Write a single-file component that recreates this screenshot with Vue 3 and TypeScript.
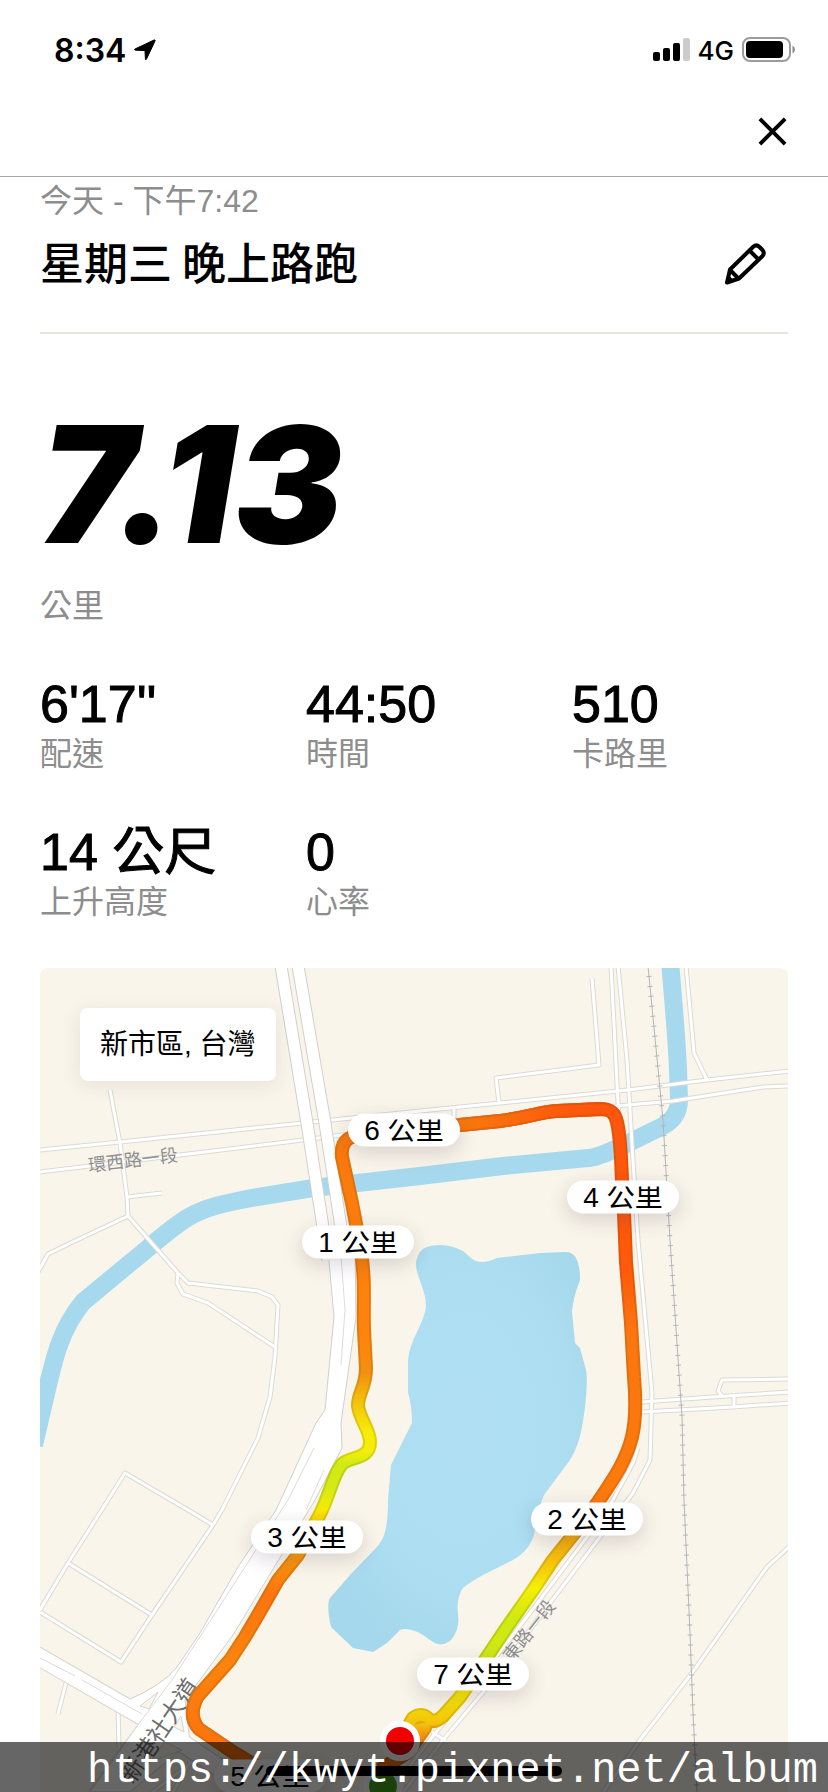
<script setup lang="ts">
interface Stat {
  value: string
  label: string
}

interface Marker {
  km: number
  x: number
  y: number
}

const MAP = { x: 40, y: 968, width: 748, height: 824 }

const stats: Stat[] = [
  { value: "6'17''", label: '配速' },
  { value: '44:50', label: '時間' },
  { value: '510', label: '卡路里' },
  { value: '14 公尺', label: '上升高度' },
  { value: '0', label: '心率' },
]

// Marker centres, in the map's own coordinates.
const markers: Marker[] = [
  { km: 5, x: 270, y: 1776 },
  { km: 1, x: 358, y: 1242 },
  { km: 2, x: 587, y: 1519 },
  { km: 3, x: 307, y: 1537 },
  { km: 4, x: 623, y: 1197 },
  { km: 6, x: 404, y: 1130 },
  { km: 7, x: 473, y: 1674 },
]

const place = (m: Marker) => ({
  left: `${((m.x - MAP.x) / MAP.width) * 100}%`,
  top: `${((m.y - MAP.y) / MAP.height) * 100}%`,
})

const roads: string[] = [
  'M40 1150 L120 1142 L303 1123 L440 1109 L500 1103 L628 1090 L707 1080 L790 1071',
  'M40 1172 L180 1155 L303 1140 L350 1134 L617 1106 L673 1101 L763 1087 L790 1086',
  'M110 1090 L120 1143 L127 1197 L128 1216 L178 1273 L188 1283 L258 1291 L272 1297 L278 1305 L275 1357 L270 1397 L258 1438 L222 1510 L213 1525 L152 1615 L121 1662 L40 1612',
  'M178 1273 L177 1283 L183 1294 L208 1303 L275 1347',
  'M127 1197 L162 1193',
  'M128 1216 L77 1240 L48 1254 L38 1272',
  'M40 1610 L68 1563 L108 1500 L125 1473 L188 1510 L213 1525',
  'M68 1563 L152 1615',
  'M67 1679 L58 1714',
  'M118 1708 L119 1748',
  'M611 966 L617 1083 L620 1140 L630 1250',
  'M618 966 L627 1060 L633 1160 L638 1240 L652 1393 L650 1460 L633 1493 L600 1537 L550 1603 L485 1690 L443 1740 L402 1794',
  'M638 1448 L633 1463 L613 1500 L587 1537 L530 1613 L470 1690 L430 1740 L388 1794',
  'M592 978 L599 1065 L496 1078 L499 1103',
  'M454 1108 L454 1122',
  'M686 966 L694 1053 L707 1080',
  'M642 1402 L727 1396 L790 1392',
  'M642 1412 L733 1407 L790 1403',
  'M734 1396 L734 1407',
  'M790 1379 L722 1380 L718 1391 L723 1397',
  'M790 1546 L767 1567 L692 1673 L640 1740 L602 1794',
  'M432 1732 L446 1741',
  'M205 1752 L150 1794 M190 1762 L172 1794',
]

const legs: { d: string; paint: string }[] = [
  {
    d: 'M460 1125 L500 1121 C530 1117 545 1111 557 1111 L600 1109 C612 1109 615 1114 617 1122 C621 1140 621 1160 622 1180 L624 1213 L626 1262 L631 1323 L634 1377 C636 1400 636 1420 632 1437 C626 1460 617 1474 598 1502 L573 1535 L553 1560 L533 1590 L507 1627 L487 1657 L460 1697 L443 1716 Q434 1724 429 1719 Q422 1712 413 1718 L405 1732 L425 1728 L408 1752 L380 1770',
    paint: 'url(#east)',
  },
  {
    d: 'M355 1136 C343 1139 341 1148 342 1157 L352 1203 L360 1245 C366 1280 363 1300 364 1330 L366 1368 C366 1388 358 1392 358 1406 C360 1420 370 1430 370 1442 C370 1460 350 1456 342 1464 C332 1476 330 1495 320 1514 L298 1555 L278 1580 L258 1615 L245 1637 L230 1660 L198 1696 Q187 1715 199 1729 L233 1752 L256 1766',
    paint: 'url(#west)',
  },
  { d: 'M355 1136 L400 1131 L460 1125 L500 1121 C530 1117 545 1111 557 1111 L600 1109', paint: 'url(#north)' },
]
</script>

<template>
  <main class="screen">
    <header class="top">
      <div class="status">
        <div class="clock">
          <span>8:34</span>
          <svg class="arrow" viewBox="0 0 22 22" aria-hidden="true">
            <path d="M1 10 L20 1 Q21.5 .5 21 2 L12.5 20 Q11.6 21.5 11.4 20 L11 11.6 L1.6 11.2 Q0 11 1 10Z" stroke="#000" />
          </svg>
        </div>
        <div class="signals">
          <svg class="bars" viewBox="0 0 37 24" aria-hidden="true">
            <rect x="0" y="14" width="7" height="9" rx="2" />
            <rect x="10" y="10" width="7" height="13" rx="2" />
            <rect x="20" y="5" width="7" height="18" rx="2" />
            <rect x="30" y="0" width="7" height="23" rx="2" fill="#ccc" />
          </svg>
          <span class="network">4G</span>
          <svg class="battery" viewBox="0 0 54 26" aria-hidden="true">
            <rect x="1" y="1" width="47" height="23" rx="7" fill="none" stroke="#9c9c9c" stroke-width="2" />
            <rect x="4" y="4" width="37" height="17" rx="4" />
            <path d="M50.500 8.500 Q53 10 53 12.500 T50.500 16.500Z" fill="#8c8c8c" />
          </svg>
        </div>
      </div>
      <button class="icon-button" type="button" aria-label="關閉">
        <svg class="close" viewBox="0 0 32 32">
          <path d="M3 3 L29 29 M29 3 L3 29" fill="none" stroke="#000" stroke-width="4" />
        </svg>
      </button>
    </header>

    <section class="run">
      <p class="when">今天 - 下午7:42</p>
      <div class="heading">
        <h1>星期三 晚上路跑</h1>
        <button class="icon-button edit" type="button" aria-label="編輯">
          <svg class="pencil" viewBox="12 12 46 44">
            <g fill="none" stroke="#000" stroke-width="4" stroke-linejoin="round">
              <path d="M17 52.500 L20 39.500 L43.500 16.500 Q46.500 14 49.500 17 L52.500 20 Q55 23 52.500 26 L29 48.500Z" />
              <path d="M39.500 20.500 L48.500 29.500 M20 40 L28.500 48.500" />
            </g>
            <path d="M15.500 54 L18 44.500 L25 51.500Z" />
          </svg>
        </button>
      </div>

      <p class="distance">7.13</p>
      <p class="label unit">公里</p>

      <dl class="stats">
        <div v-for="s in stats" :key="s.label" class="stat">
          <dd>{{ s.value }}</dd>
          <dt class="label">{{ s.label }}</dt>
        </div>
      </dl>

      <div class="map">
        <svg class="chart" viewBox="40 968 748 824" role="img" aria-label="路線地圖">
          <defs>
            <linearGradient id="west" gradientUnits="userSpaceOnUse" x1="0" y1="1113" x2="0" y2="1763">
              <stop offset="0" stop-color="#f9760d" />
              <stop offset=".34" stop-color="#ff840c" />
              <stop offset=".4" stop-color="#f48f10" />
              <stop offset=".44" stop-color="#f3bd0d" />
              <stop offset=".49" stop-color="#f7ec09" />
              <stop offset=".52" stop-color="#f5ee0a" />
              <stop offset=".54" stop-color="#d0ea14" />
              <stop offset=".58" stop-color="#d6ea14" />
              <stop offset=".61" stop-color="#f7ea08" />
              <stop offset=".67" stop-color="#f6a00d" />
              <stop offset=".74" stop-color="#fb740f" />
              <stop offset=".84" stop-color="#fb840e" />
              <stop offset="1" stop-color="#fb700e" />
            </linearGradient>
            <linearGradient id="north" gradientUnits="userSpaceOnUse" x1="350" y1="0" x2="600" y2="0">
              <stop offset="0" stop-color="#fa780d" />
              <stop offset=".5" stop-color="#f9760d" />
              <stop offset=".85" stop-color="#fd5a0c" />
              <stop offset="1" stop-color="#fc560d" />
            </linearGradient>
            <linearGradient id="east" gradientUnits="userSpaceOnUse" x1="0" y1="1100" x2="0" y2="1760">
              <stop offset="0" stop-color="#fc560d" />
              <stop offset=".26" stop-color="#ff5a0b" />
              <stop offset=".35" stop-color="#fb760f" />
              <stop offset=".61" stop-color="#fd7a0c" />
              <stop offset=".66" stop-color="#f0a610" />
              <stop offset=".7" stop-color="#f4c20c" />
              <stop offset=".74" stop-color="#f6ee08" />
              <stop offset=".78" stop-color="#d2ea12" />
              <stop offset=".86" stop-color="#cde818" />
              <stop offset=".9" stop-color="#f5e808" />
              <stop offset=".945" stop-color="#f3c20c" />
              <stop offset=".965" stop-color="#f58a10" />
              <stop offset="1" stop-color="#f0700e" />
            </linearGradient>
            <radialGradient id="lake" cx=".52" cy=".45" r=".6">
              <stop offset="0" stop-color="#b0dff3" />
              <stop offset=".6" stop-color="#aedef2" />
              <stop offset="1" stop-color="#a5d8ec" />
            </radialGradient>
          </defs>

          <path
            d="M670 960 C673 1000 677 1040 678 1070 L679 1100 Q679 1118 661 1127 L620 1147 Q596 1158 588 1158 L503 1166 L420 1176 L313 1188 L257 1197 C225 1203 205 1207 187 1218 C168 1230 150 1247 130 1263 L83 1302 C60 1330 54 1360 48 1385 L34 1445"
            fill="none" stroke="#a6d9ee" stroke-width="18" />
          <path
            d="M440 1245 Q425 1245 420 1252 Q415 1260 416 1266 C417 1278 426 1290 426 1306 C424 1325 409 1340 408 1362 L408 1393 Q412 1405 412 1423 L391 1465 L388 1500 C388 1530 384 1540 375 1549 L350 1575 L330 1598 Q326 1604 331 1627 L353 1648 L373 1652 L387 1643 L400 1630 Q412 1626 430 1640 Q442 1649 452 1639 Q460 1628 458 1615 Q456 1598 463 1588 Q470 1582 483 1575 L513 1560 Q532 1549 535 1530 Q537 1510 544 1495 L570 1460 Q579 1445 582 1427 C586 1405 588 1380 586 1370 L580 1348 L575 1343 L572 1312 Q573 1298 580 1280 Q580 1251 565 1252 L540 1253 L497 1258 Q480 1266 471 1258 L463 1251 Q452 1245 440 1245Z"
            fill="url(#lake)" />

          <g fill="none" stroke-linejoin="round">
            <g stroke="#dbdad5" stroke-width="5">
              <path v-for="d in roads" :key="d" :d="d" />
            </g>
            <g stroke="#fff" stroke-width="3">
              <path v-for="d in roads" :key="d" :d="d" />
            </g>
          </g>

          <g fill="none" stroke-linejoin="round">
            <path d="M36 1655 L145 1718 L215 1765 L262 1796" stroke="#d6d5d0" stroke-width="19" />
            <path d="M280 960 L307 1123 L328 1260" stroke="#d0d0cd" stroke-width="13" />
            <path d="M297 960 L325 1123 L346 1260" stroke="#d0d0cd" stroke-width="13" />
          </g>
          <path
            d="M328 1250 L334 1317 L325 1410 L316 1423 L276 1510 L238 1567 L200 1633 L177 1667 Q163 1685 128 1700 L140 1722 L90 1792 L130 1792 L190 1742 L185 1700 L233 1635 L315 1500 L342 1448 L341 1423 L356 1317 L355 1250Z"
            fill="#fff" stroke="#d0d0cd" />
          <g fill="none" stroke-linejoin="round">
            <path d="M36 1655 L145 1718 L215 1765 L262 1796" stroke="#fff" stroke-width="17" />
            <path d="M280 960 L307 1123 L328 1260" stroke="#fff" stroke-width="11" />
            <path d="M297 960 L325 1123 L346 1260" stroke="#fff" stroke-width="11" />
            <path
              d="M341 1256 L345 1310 L341 1365 M314 1448 L288 1500 L245 1567 L172 1680 L125 1742 L88 1792 M324 1470 L306 1510 M40 1658 L75 1676 M82 1680 L142 1714"
              stroke="#dcdcda" />
            <path d="M140 1706 L158 1692 L149 1709Z M174 1727 L181 1716 L184 1732Z M150 1762 L165 1742 L182 1750Z" fill="#f9f5ea" stroke="#d6d5d0" />
          </g>

          <g fill="none" stroke="#b4b6b9">
            <path d="M648 966 L663 1120 L670 1240 L682 1417 L684 1500 L690 1633 L693 1713 L697 1792" />
            <path d="M648 966 L663 1120 L670 1240 L682 1417 L684 1500 L690 1633 L693 1713 L697 1792" stroke-width="5" stroke-dasharray="1 9" />
          </g>

          <g class="road-names">
            <text x="89" y="1172" font-size="18" transform="rotate(-7 89 1172)">環西路一段</text>
            <text x="512" y="1663" font-size="18" transform="rotate(-52 512 1663)">東路一段</text>
            <text x="133" y="1785" font-size="24" transform="rotate(-56 133 1785)" fill="#6f6f6f">新港社大道</text>
          </g>

          <g fill="none" stroke-linejoin="round">
            <template v-for="leg in legs" :key="leg.paint">
              <path :d="leg.d" :stroke="leg.paint" stroke-width="14" />
              <path :d="leg.d" stroke="#5a3a00" stroke-opacity=".15" stroke-width="14" />
              <path :d="leg.d" :stroke="leg.paint" stroke-width="10" />
            </template>
          </g>

          <g stroke="#fff" stroke-width="6">
            <circle cx="383" cy="1786" r="17" fill="#42a41a" />
            <circle cx="400" cy="1741" r="17" fill="#f20000" />
          </g>
        </svg>

        <p class="place">新市區, 台灣</p>
        <span v-for="m in markers" :key="m.km" class="marker" :style="place(m)">
          <span class="marker-text">{{ m.km }} 公里</span>
        </span>
      </div>
    </section>

    <div class="caption">
      <span class="home-bar"></span>
      <span class="caption-text">https://kwyt.pixnet.net/album</span>
    </div>
  </main>
</template>

<style>
body {
  background: #fff;
}
</style>

<style scoped>
.screen {
  position: relative;
  overflow: hidden;
  color: #000;
  background: #fff;
  font-family: "Liberation Sans", "Noto Sans CJK TC", sans-serif;
}

p,
h1,
dl,
dd {
  margin: 0;
}

svg {
  display: block;
}

.top {
  display: flex;
  flex-direction: column;
  align-items: flex-end;
  height: 176px;
  border-bottom: 1px solid #a8a8a8;
}

.status {
  align-self: stretch;
  display: flex;
  justify-content: space-between;
  align-items: center;
  height: 40px;
  padding: 30px 32px 32px 54px;
  font-family: Inter, "Liberation Sans", sans-serif;
}

.clock,
.signals {
  display: flex;
  align-items: center;
  gap: 8px;
}

.clock {
  font-size: 32px;
  font-weight: 600;
}

.arrow {
  width: 22px;
  height: 22px;
}

.bars {
  width: 37px;
  height: 24px;
}

.network {
  font-size: 26px;
  font-weight: 500;
}

.battery {
  width: 54px;
  height: 26px;
}

.icon-button {
  padding: 0;
  border: 0;
  background: none;
  cursor: pointer;
}

.top .icon-button {
  margin: 14px 40px 0 0;
}

.close {
  width: 31px;
  height: 31px;
}

.run {
  padding: 0 40px;
}

.when,
.label {
  color: #8d8d8d;
  font-size: 32px;
  line-height: 48px;
}

.heading {
  display: flex;
  justify-content: space-between;
  align-items: center;
  height: 77px;
  padding-bottom: 30px;
  border-bottom: 2px solid #e5e5e0;
}

h1 {
  padding-bottom: 6px;
  font-size: 44px;
  font-weight: 500;
  font-family: "Noto Sans CJK TC", sans-serif;
  line-height: 64px;
}

.edit {
  margin-right: 20px;
}

.pencil {
  width: 46px;
  height: 44px;
}

.distance {
  margin-top: 60px;
  font: italic 900 162px/180px Inter, "Liberation Sans", sans-serif;
}

.unit {
  margin-top: 8px;
}

.stats {
  display: grid;
  grid-template-columns: repeat(3, 1fr);
  gap: 48px 50px;
  margin-top: 48px;
}

.stat {
  display: flex;
  flex-direction: column;
}

dd {
  font-size: 52px;
  line-height: 52px;
  white-space: nowrap;
  -webkit-text-stroke: 1px #000;
}

.map {
  position: relative;
  margin-top: 42px;
  overflow: hidden;
  border-radius: 8px 8px 0 0;
  background: #f9f5ea;
}

.chart {
  width: 100%;
  height: auto;
}

.road-names {
  fill: #909090;
  font-family: "Noto Sans CJK TC", sans-serif;
}

.place {
  position: absolute;
  top: 40px;
  left: 40px;
  padding: 0 20px;
  border-radius: 8px;
  background: #fff;
  box-shadow: 0 4px 20px rgba(80, 50, 80, 0.1);
  font-size: 28px;
  line-height: 73px;
}

.marker {
  position: absolute;
  display: flex;
  justify-content: center;
  align-items: center;
  width: 112px;
  height: 33px;
  border-radius: 17px;
  background: #fff;
  box-shadow: 0 6px 20px rgba(60, 40, 60, 0.18);
  transform: translate(-50%, -50%);
}

.marker-text {
  height: 22px;
  overflow: hidden;
  font-size: 28px;
  line-height: 22px;
  white-space: nowrap;
}

.caption {
  position: absolute;
  right: 0;
  bottom: 0;
  left: 0;
  box-sizing: border-box;
  display: flex;
  justify-content: flex-end;
  height: 50px;
  padding: 4px 10px 0 0;
  background: rgba(0, 0, 0, 0.6);
}

.home-bar {
  position: absolute;
  bottom: 16px;
  left: 50%;
  width: 296px;
  height: 10px;
  margin-left: -148px;
  border-radius: 5px;
  background: #000;
}

.caption-text {
  position: relative;
  color: #fff;
  font: 42px/50px "Liberation Mono", monospace;
}
</style>
